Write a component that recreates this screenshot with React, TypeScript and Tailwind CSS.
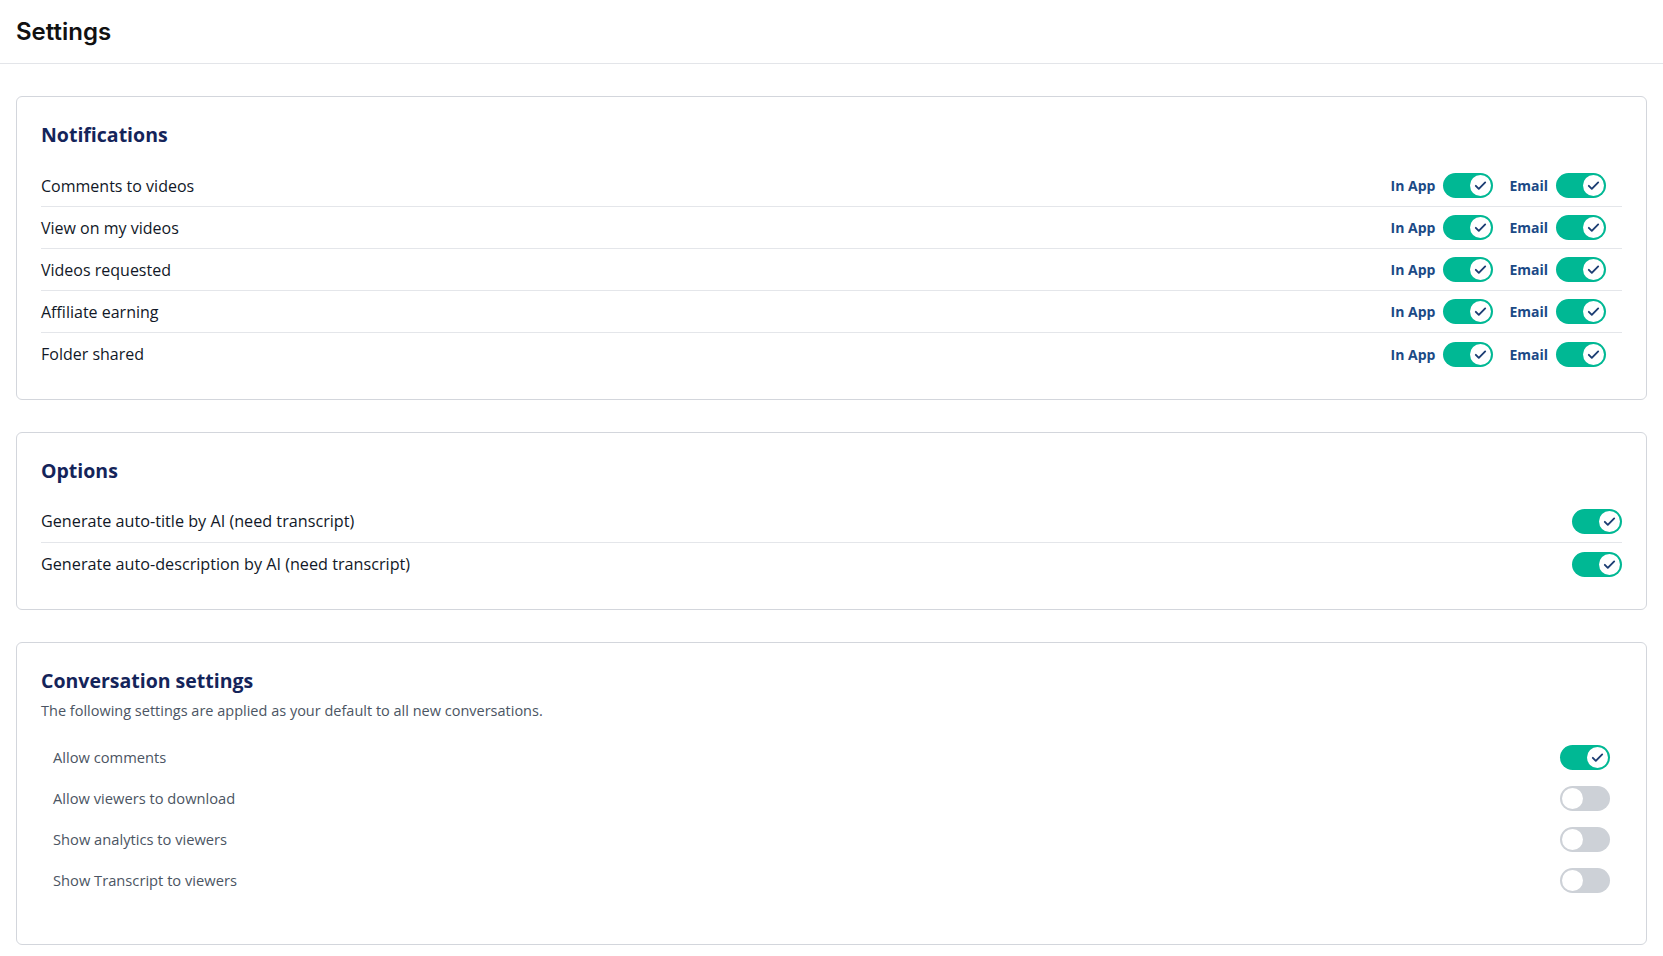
import type { ReactNode } from "react";

const notificationRows = [
  "Comments to videos",
  "View on my videos",
  "Videos requested",
  "Affiliate earning",
  "Folder shared",
];

const optionRows = [
  "Generate auto-title by AI (need transcript)",
  "Generate auto-description by AI (need transcript)",
];

const conversationRows = [
  { label: "Allow comments", on: true },
  { label: "Allow viewers to download", on: false },
  { label: "Show analytics to viewers", on: false },
  { label: "Show Transcript to viewers", on: false },
];

function Toggle({ on }: { on: boolean }) {
  return (
    <button
      type="button"
      className={`flex h-[25px] w-[50px] shrink-0 items-center rounded-full p-[2px] ${
        on ? "justify-end bg-[#00b894]" : "justify-start bg-[#cdd1d7]"
      }`}
    >
      <span className="flex h-[21px] w-[21px] items-center justify-center rounded-full bg-white">
        {on && (
          <svg width="15" height="15" viewBox="0 0 24 24" fill="none">
            <path
              d="M4.5 12.5l4.8 4.8L19.5 7"
              stroke="#1c3d73"
              strokeWidth="3"
              strokeLinecap="round"
              strokeLinejoin="round"
            />
          </svg>
        )}
      </span>
    </button>
  );
}

function Card({ children, className = "" }: { children: ReactNode; className?: string }) {
  return (
    <section className={`rounded-md border border-[#d3d6dc] bg-white px-6 pt-6 ${className}`}>
      {children}
    </section>
  );
}

function CardTitle({ children }: { children: ReactNode }) {
  return <h2 className="text-[19.5px] font-bold leading-7 text-[#14245a]">{children}</h2>;
}

export default function App() {
  return (
    <div
      className="min-h-screen bg-white text-[#111827]"
      style={{ fontFamily: "'Open Sans', 'Noto Sans', sans-serif" }}
    >
      <header className="flex h-16 items-center border-b border-[#e3e5e9] px-4">
        <h1
          className="text-[24px] font-semibold text-[#111]"
          style={{ fontFamily: "Inter, 'Noto Sans', sans-serif" }}
        >
          Settings
        </h1>
      </header>

      <main className="flex flex-col gap-8 px-4 pt-8 pb-8">
        <Card className="pb-6">
          <CardTitle>Notifications</CardTitle>
          <div className="mt-4">
            {notificationRows.map((row) => (
              <div
                key={row}
                className="flex h-[42px] items-center justify-between border-b border-[#e4e6ea] pr-4 last:border-b-0"
              >
                <span className="text-[16px]">{row}</span>
                <div className="flex items-center">
                  <span className="mr-2 text-[14px] font-bold text-[#1b4a86]">In App</span>
                  <Toggle on />
                  <span className="ml-4 mr-2 text-[14px] font-bold text-[#1b4a86]">Email</span>
                  <Toggle on />
                </div>
              </div>
            ))}
          </div>
        </Card>

        <Card className="pb-6">
          <CardTitle>Options</CardTitle>
          <div className="mt-4">
            {optionRows.map((row) => (
              <div
                key={row}
                className="flex h-[42px] items-center justify-between border-b border-[#e4e6ea] last:border-b-0"
              >
                <span className="text-[16.2px]">{row}</span>
                <Toggle on />
              </div>
            ))}
          </div>
        </Card>

        <Card className="pb-[43px]">
          <CardTitle>Conversation settings</CardTitle>
          <p className="mt-1.5 text-[14.5px] leading-5 text-[#4b5563]">
            The following settings are applied as your default to all new conversations.
          </p>
          <div className="mt-4">
            {conversationRows.map((row) => (
              <div key={row.label} className="flex h-[41px] items-center justify-between px-3">
                <span className="text-[14.7px] text-[#4b5563]">{row.label}</span>
                <Toggle on={row.on} />
              </div>
            ))}
          </div>
        </Card>
      </main>
    </div>
  );
}
